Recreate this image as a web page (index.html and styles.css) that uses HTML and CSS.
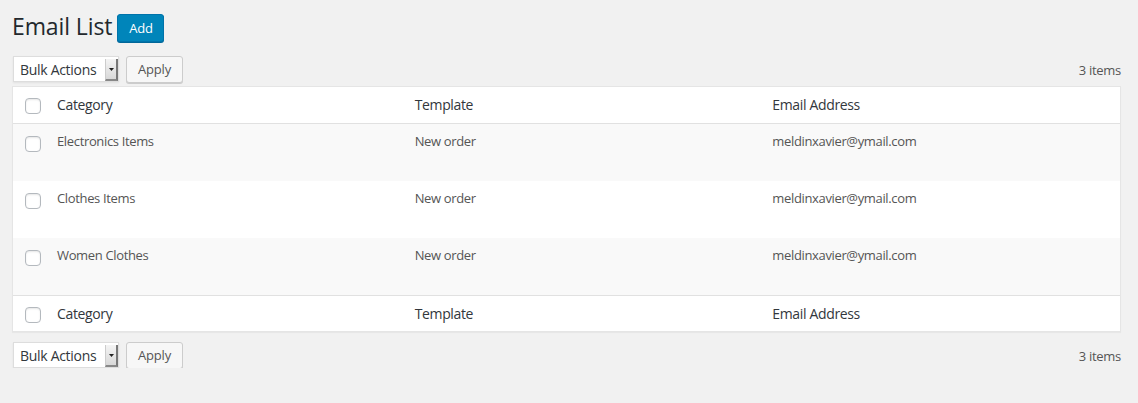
FILE: index.html
```html
<!DOCTYPE html>
<html>
<head>
<meta charset="utf-8">
<link rel="stylesheet" href="styles.css">
</head>
<body>
<div class="wrap">
  <div class="heading">
    <h1 class="title">Email List</h1>
    <a class="btn-add">Add</a>
  </div>
  <div class="tablenav">
    <div class="actions">
      <div class="select"><span class="select-label">Bulk Actions</span><span class="select-arrow"><svg width="5" height="3" viewBox="0 0 5 3"><path d="M0 0H5L2.5 3Z" fill="#222"/></svg></span></div>
      <button class="btn-apply">Apply</button>
    </div>
    <div class="count">3 items</div>
  </div>
  <div class="table">
    <div class="row head">
      <div class="cell check"><span class="cb"></span></div>
      <div class="cell">Category</div>
      <div class="cell">Template</div>
      <div class="cell">Email Address</div>
    </div>
    <div class="row item alt">
      <div class="cell check"><span class="cb"></span></div>
      <div class="cell">Electronics Items</div>
      <div class="cell">New order</div>
      <div class="cell">meldinxavier@ymail.com</div>
    </div>
    <div class="row item">
      <div class="cell check"><span class="cb"></span></div>
      <div class="cell">Clothes Items</div>
      <div class="cell">New order</div>
      <div class="cell">meldinxavier@ymail.com</div>
    </div>
    <div class="row item alt">
      <div class="cell check"><span class="cb"></span></div>
      <div class="cell">Women Clothes</div>
      <div class="cell">New order</div>
      <div class="cell">meldinxavier@ymail.com</div>
    </div>
    <div class="row head foot">
      <div class="cell check"><span class="cb"></span></div>
      <div class="cell">Category</div>
      <div class="cell">Template</div>
      <div class="cell">Email Address</div>
    </div>
  </div>
  <div class="tablenav bottom">
    <div class="actions">
      <div class="select"><span class="select-label">Bulk Actions</span><span class="select-arrow"><svg width="5" height="3" viewBox="0 0 5 3"><path d="M0 0H5L2.5 3Z" fill="#222"/></svg></span></div>
      <button class="btn-apply">Apply</button>
    </div>
    <div class="count">3 items</div>
  </div>
</div>
</body>
</html>
```
FILE: styles.css
```css
* { box-sizing: border-box; }
html, body { margin: 0; padding: 0; }
body {
  background: #f1f1f1;
  font-family: "Open Sans", "Noto Sans", sans-serif;
  color: #444;
  font-size: 13px;
}
.wrap { padding: 13px 17px 0 12px; }
.heading { display: flex; align-items: center; gap: 5px; height: 30px; }
.title {
  margin: 0;
  font-weight: 400;
  font-size: 23px;
  color: #23282d;
  letter-spacing: -0.1px;
  line-height: 28px;
  position: relative;
  top: -2px;
}
.btn-add {
  display: inline-flex; align-items: center; justify-content: center;
  width: 47px; height: 28px;
  background: #0085ba;
  border: 1px solid #0073aa;
  border-radius: 3px;
  box-shadow: 0 1px 0 #006799;
  color: #fff;
  font-size: 13px;
  letter-spacing: -0.2px;
}
.tablenav {
  display: flex; justify-content: space-between; align-items: center;
  margin-top: 13px; height: 26px; padding-left: 1px;
}
.tablenav.bottom { margin-top: 10px; }
.actions { display: flex; gap: 7px; align-items: center; }
.select {
  display: flex; align-items: stretch;
  width: 106px; height: 26px;
  background: #fff;
  border: 1px solid #ddd;
  box-shadow: 0 1px 2px rgba(0,0,0,0.07);
}
.select-label {
  flex: 1; display: flex; align-items: center; padding-left: 6px;
  font-size: 14px; color: #32373c; letter-spacing: -0.3px;
}
.select-arrow {
  width: 13px;
  display: flex; align-items: center; justify-content: center;
  background: linear-gradient(#f4f4f4, #d8d8d8);
  border-left: 1px solid #ccc;
  border-right: 2px solid #777;
  border-bottom: 2px solid #888;
  margin: 2px 0 0 0;
}
.btn-apply {
  width: 57px; height: 27px;
  font-family: inherit; font-size: 13px; color: #555;
  background: #f7f7f7;
  border: 1px solid #ccc;
  border-radius: 3px;
  box-shadow: 0 1px 0 #ccc;
  letter-spacing: -0.2px;
  padding: 0;
}
.count { font-size: 13px; color: #555; letter-spacing: -0.3px; padding-top: 2px; }
.table {
  margin-top: 4px;
  background: #fff;
  border: 1px solid #e5e5e5;
  box-shadow: 0 1px 1px rgba(0,0,0,0.04);
}
.row { display: grid; grid-template-columns: 34px 1fr 1fr 1fr; }
.row.head { height: 37px; align-items: center; border-bottom: 1px solid #e1e1e1; }
.row.head.foot { border-bottom: 0; border-top: 1px solid #e1e1e1; height: 36px; }
.row.head .cell { font-size: 14px; color: #32373c; letter-spacing: -0.35px; padding-bottom: 2px; }
.row.head.foot .cell { padding-bottom: 0; }
.row.item { height: 57px; }
.row.item.alt { background: #f9f9f9; }
.cell { padding-left: 10px; }
.row.item .cell { padding-top: 8px; color: #555; letter-spacing: -0.35px; line-height: 19px; }
.cell.check { padding-left: 12px; display: flex; }
.row.head .cell.check { padding-top: 2px; padding-bottom: 0; }
.row.item .cell.check { padding-top: 12px; }
.cb {
  display: block; width: 16px; height: 16px;
  border: 1px solid #b4b9be; border-radius: 4px;
  background: #fff;
  box-shadow: inset 0 1px 2px rgba(0,0,0,0.1);
}
```
